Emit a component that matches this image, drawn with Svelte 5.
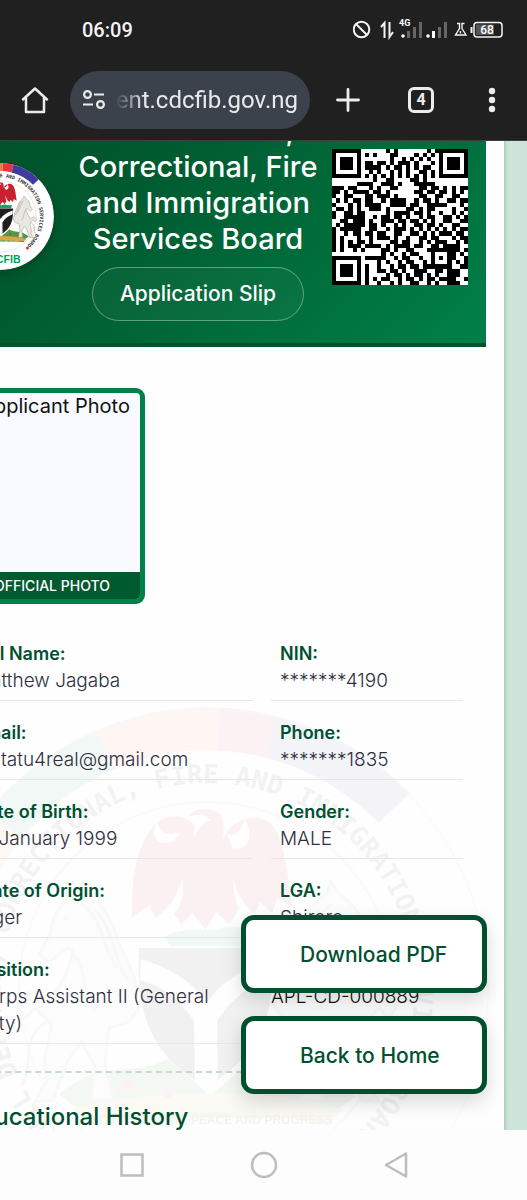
<script lang="ts">
  const fields = [
    { label: 'Full Name:', value: 'Matthew Jagaba' },
    { label: 'NIN:', value: '*******4190' },
    { label: 'Email:', value: 'matatu4real@gmail.com' },
    { label: 'Phone:', value: '*******1835' },
    { label: 'Date of Birth:', value: '01 January 1999' },
    { label: 'Gender:', value: 'MALE' },
    { label: 'State of Origin:', value: 'Niger' },
    { label: 'LGA:', value: 'Shiroro' },
    { label: 'Position:', value: 'Corps Assistant II (General Duty)' },
  ];

  const qrRows = [
    '.............#.#.......#.#.......',
    '........#.#...##....#.#.#........',
    '..............#..#.#.#.#.........',
    '........##.##.#.###.#...#........',
    '........####.#.##.#.#.##.........',
    '.........#.#..#.#.#..##.#........',
    '........#.#.#.#.#.#.#.#.#........',
    '..........#..##....##.#..........',
    '......####..###.#...#####........',
    '###.##...#.#..##.....##.##.#.#.##',
    '##.#.####.##.#......##.##.##.#.#.',
    '#..##...##.###.#.....##..##..##..',
    '.#.#.##.##..#.####..#.##.#..##.##',
    '#...#.#.####..####.##..#####...#.',
    '.##.#.#..###.#....##.#.##....#..#',
    '#..##.##.....#.####.##.#..#..#.#.',
    '#..#####..#.##.##.#..#.##..##.#.#',
    '..##.###.#..###.##.##.#.#..##..##',
    '.#.#####.##.#..#.#..##.##.#..##..',
    '#.#####..##..#.###.#.#.#.#.#.#.##',
    '#..#.##.##.##..##..##.#.#.###.##.',
    '#.#...#..#.###.#..#..##.##...#.##',
    '#.#.#.##.#....##.##..#.#.###..#.#',
    '#.#.###.####.#.####.##..##.####..',
    '#.#..#.#....##.#..##...########.#',
    '............#.#..#.##...#...##.#.',
    '........#####..#.##..#..#.#.##..#',
    '...........#.#..#.##..#.#...#.#.#',
    '........#..#..#.##.##.#######..##',
    '........#..##.##.#..###..##.###..',
    '........#....#.##.#.##.#.#..###..',
    '........#.#.##..#.##.#.##.####..#',
    '........#..#..#.#..##..#.#..###..',
  ];
  const finders = [[0, 0], [26, 0], [0, 26]];
</script>

{#snippet crest(id: string)}
  <circle r="282" fill="#fff" />
  <g fill="none" stroke-width="43">
    <path d="M-257-47A261 261 0 0 1-202-165" stroke="#f0963c" />
    <path d="M-202-165A261 261 0 0 1-102-240" stroke="#159a63" />
    <path d="M-102-240A261 261 0 0 1 12-261" stroke="#f07a45" />
    <path d="M12-261A261 261 0 0 1 64-253" stroke="#ea3340" />
    <path d="M64-253A261 261 0 0 1 187-182" stroke="#3d3b9e" />
  </g>
  <circle r="281" fill="none" stroke="#999" stroke-width="1" />
  <circle r="188" fill="none" stroke="#aaa" stroke-width="1.500" />
  <path id="{id}-ring" d="M0 207A207 207 0 1 1 1 207" fill="none" />
  <text class="motto">
    <textPath href="#{id}-ring" startOffset="144">CIVIL DEFENCE, CORRECTIONAL, FIRE AND IMMIGRATION SERVICES BOARD</textPath>
  </text>
  <!-- eagle -->
  <g transform="translate(-8 -78) scale(0.86 0.72)">
    <path fill="#c8202c" d="M-6-103C0-118 6-126 15-127 8-135-2-137-12-132-10-143 8-147 21-139 31-132 29-112 27-100 39-132 72-143 88-116 101-88 104-45 108-7L91-19 85 2 71-14 62 9 48-8 35 17 20 0 8 25-8 1-20 18-34-6-49 12-58-9-78 8C-78-46-74-82-58-111-47-135-22-141-5-121Z" />
    <path fill="#fff" d="M-49-126C-58-102-48-92-30-98L-21-111C-36-104-46-111-49-126ZM53-130C49-111 39-101 32-111L39-89C57-83 65-104 53-130Z" />
    <path fill="#fff" d="M-62 14C-40 5-26-18-20-45-14-12-30 15-54 26ZM40-48C45-16 62 10 96 16L70 28C48 12 38-18 40-48Z" />
  </g>
  <path d="M-42-54C-14-66 0-56 15-62S40-56 61-60L56-44-37-44Z" fill="#239b62" />
  <!-- shield -->
  <g transform="translate(-4 -80)">
    <path d="M-64 38L70 38C71 93 67 139 3 177-60 141-66 94-64 38Z" fill="#231f20" />
    <path d="M-62 49C-33 58-13 70 4 92 22 69 40 59 69 49L68 68C44 76 27 91 14 111L15 180 3 187-8 180-9 111C-23 89-41 76-63 70Z" fill="#fff" />
  </g>
  <!-- mound -->
  <g transform="translate(0 -62)">
    <path d="M-148 166C-105 129-70 151-39 130L3 168 47 130C76 149 112 132 149 168L119 190-116 190Z" fill="#4e9a45" />
    <path d="M-134 181C-60 160 64 160 135 181L120 198C57 181-55 181-119 198Z" fill="#d9a642" />
    <g fill="#d8323b">
      <circle cx="-79" cy="158" r="6" /><circle cx="-39" cy="164" r="6" /><circle cx="52" cy="156" r="6" /><circle cx="93" cy="162" r="6" />
    </g>
  </g>
  <!-- horses -->
  <g id="{id}-horse" transform="translate(0 -46)" fill="#e9e7df" stroke="#a5a298" stroke-width="3">
    <path d="M72 50C68 32 82 16 90-6 96-28 106-42 120-50L124-62 132-50C148-40 156-26 156-12L168 10 158 18 140 4 134 6C136 28 150 42 156 58L178 48 190 62 182 74 172 64 156 80C156 100 168 116 160 136L172 158 154 156 140 118 126 98 112 122 116 156 94 156 102 118 98 84 78 78 66 60Z" />
    <path d="M126-40C104-28 106 4 90 24M112-34C92-14 96 12 78 38M134 10C120 22 126 50 112 66M160 78C188 92 172 124 186 142M140-26h3" fill="none" />
  </g>
  <use href="#{id}-horse" transform="scale(-1 1)" />
  <g fill="#d8323b">
    <circle cx="-146" cy="162" r="8" /><circle cx="142" cy="166" r="8" />
  </g>
  <text class="ribbon" y="134">UNITY AND FAITH, PEACE AND PROGRESS</text>
  <text class="acronym" y="243">CDCFIB</text>
{/snippet}

<div class="phone">
  <header class="chrome">
    <div class="status">
      <span class="clock">06:09</span>
      <svg width="154" height="24" viewBox="353 18 154 24" fill="none" stroke="#f3f3f3" stroke-width="2" aria-label="Mobile network 4G, battery 68 percent" role="img">
        <circle cx="361.500" cy="29.500" r="7.800" />
        <path d="M356 24l11 11" />
        <path d="M384.500 38V23l-3.500 4M389.500 22v15l3.500-5" />
        <g stroke="none" fill="#666">
          <circle cx="403" cy="36" r="1.800" fill="#fff" />
          <rect x="407" y="31" width="3" height="7" /><rect x="413" y="27" width="3" height="11" /><rect x="419" y="22" width="3" height="16" />
          <circle cx="428" cy="36" r="1.800" fill="#fff" />
          <rect x="432" y="31" width="3" height="7" fill="#fff" /><rect x="438" y="27" width="3" height="11" /><rect x="444" y="22" width="3" height="16" />
        </g>
        <text class="net" x="399" y="26">4G</text>
        <path d="M457 23.500h2.500v5l-4 6.500h10.500l-4-6.500v-5h2.500M460.500 31v2.500" stroke-width="1.400" />
        <rect x="474" y="22.500" width="28" height="14.500" rx="3" stroke-width="1.500" />
        <rect x="476" y="24.500" width="18" height="10.500" fill="#555" stroke="none" />
        <path d="M471.500 27v6" />
        <text class="level" x="487" y="34">68</text>
      </svg>
    </div>
    <div class="toolbar">
      <button type="button" aria-label="Home">
        <svg width="30" height="30" viewBox="0 0 30 30" fill="none" stroke="#ececec" stroke-width="2.500" stroke-linejoin="round" stroke-linecap="round"><path d="M3 14.500L15 3.500l12 11M6 12.500V27h18V12.500" /></svg>
      </button>
      <div class="omnibox">
        <svg width="24" height="22" viewBox="0 0 24 22" fill="none" stroke="#ececec" stroke-width="2.200"><circle cx="5.500" cy="5.500" r="3.400" /><path d="M12 5.500h10M1 15.500h10" /><circle cx="18.500" cy="15.500" r="3.400" /></svg>
        <div class="url"><span>recruitment.cdcfib.gov.ng</span></div>
      </div>
      <button type="button" aria-label="New tab">
        <svg width="26" height="26" viewBox="0 0 26 26" stroke="#ececec" stroke-width="2.800" stroke-linecap="round"><path d="M13 2.500v21M2.500 13h21" /></svg>
      </button>
      <button type="button" aria-label="Switch tabs"><span class="tabs">4</span></button>
      <button type="button" aria-label="Menu">
        <svg width="8" height="26" viewBox="0 0 8 26" fill="#ececec"><circle cx="4" cy="4" r="3.200" /><circle cx="4" cy="13" r="3.200" /><circle cx="4" cy="22" r="3.200" /></svg>
      </button>
    </div>
  </header>

  <main class="page">
    <article class="slip">
      <svg class="watermark" viewBox="-284 -284 568 568" aria-hidden="true">{@render crest('watermark')}</svg>
      <div class="banner">
        <svg class="logo" viewBox="-282 -282 564 564" role="img" aria-label="Board crest">{@render crest('logo')}</svg>
        <div class="heading">
          <h1>Civil Defence, Correctional, Fire and Immigration Services Board</h1>
          <span class="pill">Application Slip</span>
        </div>
        <svg class="qr" viewBox="0 0 33 33" shape-rendering="crispEdges" role="img" aria-label="QR code">
          <rect width="33" height="33" fill="#fff" />
          {#each qrRows as row, y}
            {#each row as cell, x}
              {#if cell === '#'}<rect {x} {y} width="1" height="1" />{/if}
            {/each}
          {/each}
          {#each finders as [x, y]}
            <path d="M{x} {y}h7v7h-7zM{x + 1} {y + 1}v5h5v-5zM{x + 2} {y + 2}h3v3h-3z" fill-rule="evenodd" />
          {/each}
        </svg>
      </div>

      <div class="body">
        <figure class="photo">
          <div class="missing">Applicant Photo</div>
          <figcaption>OFFICIAL PHOTO</figcaption>
        </figure>

        <dl class="details">
          {#each fields as field}
            <div class="field">
              <dt>{field.label}</dt>
              <dd>{field.value}</dd>
            </div>
          {/each}
          <div class="reference">APL-CD-000889</div>
        </dl>

        <section class="history">
          <h2>Educational History</h2>
        </section>
      </div>
    </article>

    <div class="actions">
      <button type="button">Download PDF</button>
      <button type="button">Back to Home</button>
    </div>
  </main>

  <nav class="system" aria-label="System navigation">
    <button type="button" aria-label="Recent apps">
      <svg width="28" height="28" viewBox="0 0 28 28"><rect x="3.500" y="3.500" width="21" height="21" /></svg>
    </button>
    <button type="button" aria-label="Home screen">
      <svg width="28" height="28" viewBox="0 0 28 28"><circle cx="14" cy="14" r="12" /></svg>
    </button>
    <button type="button" aria-label="Back">
      <svg width="28" height="28" viewBox="0 0 28 28"><path d="M24 2.500v23L4 14z" stroke-linejoin="round" /></svg>
    </button>
  </nav>
</div>

<style>
  :global(body) {
    margin: 0;
    background: #fdfdfd;
  }
  .phone {
    height: 100vh;
    display: flex;
    flex-direction: column;
    font-family: Inter, 'Open Sans', sans-serif;
    overflow: hidden;
  }
  button {
    font: inherit;
    border: 0;
    background: none;
    padding: 0;
    cursor: pointer;
  }
  svg {
    display: block;
  }

  .chrome {
    background: #202020;
    color: #f3f3f3;
    font-family: Roboto, sans-serif;
    border-bottom: 1px solid #3c3f3d;
  }
  .status {
    display: flex;
    align-items: center;
    justify-content: space-between;
    height: 60px;
    padding: 0 20px 0 82px;
  }
  .clock {
    font-size: 20px;
    font-weight: 500;
  }
  .net {
    font: 700 9px Roboto, sans-serif;
    fill: #fff;
    stroke: none;
  }
  .level {
    font: 500 12px Roboto, sans-serif;
    fill: #fff;
    stroke: none;
    text-anchor: middle;
  }
  .toolbar {
    display: grid;
    grid-template-columns: 70px minmax(0, 1fr) 76px 70px 71px;
    align-items: center;
    height: 80px;
  }
  .toolbar button {
    display: grid;
    place-items: center;
    color: #ececec;
  }
  .omnibox {
    display: flex;
    align-items: center;
    gap: 10px;
    height: 58px;
    padding: 0 12px;
    border-radius: 29px;
    background: #3c424b;
  }
  .omnibox svg {
    flex: none;
  }
  .url {
    flex: 1;
    min-width: 0;
    display: flex;
    justify-content: flex-end;
    overflow: hidden;
    font-size: 24px;
    color: #e8eaed;
    mask-image: linear-gradient(90deg, transparent, #000 28px);
  }
  .tabs {
    box-sizing: border-box;
    width: 26px;
    height: 26px;
    border: 3px solid #ececec;
    border-radius: 6px;
    font-size: 16px;
    font-weight: 700;
    line-height: 20px;
  }

  .page {
    position: relative;
    flex: 1;
    min-height: 0;
    overflow: hidden;
    padding-right: 23px;
    background: #cde5d8;
  }
  .slip {
    position: relative;
    margin: -55px 0 0 -71px;
    padding-right: 18px;
    min-height: 100%;
    padding-bottom: 80px;
    background: #fefefe;
    box-shadow: 0 0 4px rgba(0, 40, 20, 0.3);
  }
  .watermark {
    position: absolute;
    top: 620px;
    left: -6px;
    width: 568px;
    height: 568px;
    opacity: 0.05;
  }
  .motto {
    font: 700 26px 'DejaVu Sans Mono', monospace;
    fill: #333;
  }
  .ribbon {
    font: 700 12px 'Liberation Sans', sans-serif;
    fill: #5e3c16;
    text-anchor: middle;
  }
  .acronym {
    font: 700 56px 'Liberation Sans', sans-serif;
    fill: #00a35a;
    text-anchor: middle;
  }

  .banner {
    position: relative;
    box-sizing: border-box;
    height: 261px;
    padding: 4px 18px 0;
    display: grid;
    grid-template-columns: 107px minmax(0, 1fr) 136px;
    gap: 18px;
    align-items: center;
    background: linear-gradient(135deg, #004d28 0%, #00592f 35%, #008048 100%);
    border-bottom: 4px solid #00532b;
  }
  .logo {
    width: 107px;
    height: 107px;
    border-radius: 50%;
    box-shadow: 0 4px 10px rgba(0, 0, 0, 0.2);
  }
  .qr {
    width: 136px;
    height: 136px;
  }
  .heading {
    margin: 0 -6px 0 4px;
    text-align: center;
    color: #fff;
  }
  h1 {
    margin: 0 0 10px;
    font-size: 29px;
    font-weight: 500;
    line-height: 36px;
  }
  .pill {
    display: inline-block;
    padding: 0 27px;
    border: 1px solid rgba(255, 255, 255, 0.35);
    border-radius: 27px;
    background: rgba(255, 255, 255, 0.03);
    font-size: 21px;
    font-weight: 500;
    line-height: 52px;
  }

  .body {
    position: relative;
    padding: 41px 23px 0 36px;
  }
  .photo {
    box-sizing: border-box;
    width: 180px;
    height: 216px;
    margin: 0 0 36px;
    display: flex;
    flex-direction: column;
    justify-content: space-between;
    border: 5px solid #008048;
    border-radius: 9px;
    background: #f8faff;
    overflow: hidden;
  }
  .missing {
    text-align: center;
    font-size: 20px;
    line-height: 26px;
    color: #111;
  }
  figcaption {
    padding-right: 6px;
    background: #005a30;
    color: #fff;
    font-size: 14px;
    font-weight: 500;
    line-height: 27px;
    text-align: center;
  }
  .details {
    margin: 0;
    display: grid;
    grid-template-columns: 3fr 2fr;
    gap: 18px;
    font-size: 18px;
    line-height: 27px;
  }
  .field {
    padding: 0 9px 6px;
    border-bottom: 1px solid #e4e7ea;
  }
  dt {
    font-weight: 600;
    color: #005030;
  }
  dd {
    margin: 0;
    font-size: 19px;
    font-weight: 300;
    color: #2d3040;
  }
  .reference {
    padding-top: 27px;
    font-size: 19px;
    font-weight: 300;
    color: #111;
  }
  .history {
    margin-top: 27px;
    border-top: 2px dashed #c9d9cf;
  }
  h2 {
    margin: 0;
    padding-top: 26px;
    font-size: 24px;
    font-weight: 500;
    line-height: 36px;
    color: #005030;
  }

  .actions {
    position: absolute;
    right: 40px;
    bottom: 36px;
    width: 246px;
    display: grid;
    gap: 23px;
  }
  .actions button {
    height: 78px;
    padding-left: 54px;
    border: 5px solid #005030;
    border-radius: 13px;
    background: #fff;
    box-shadow: 0 8px 20px rgba(0, 0, 0, 0.15);
    color: #005030;
    font-size: 21px;
    font-weight: 500;
    text-align: left;
  }

  .system {
    display: grid;
    grid-template-columns: repeat(3, 132px);
    justify-content: center;
    align-items: center;
    height: 70px;
    background: #fdfdfd;
  }
  .system button {
    display: grid;
    place-items: center;
  }
  .system svg {
    fill: none;
    stroke: #bdbdbd;
    stroke-width: 2.5;
  }
</style>
